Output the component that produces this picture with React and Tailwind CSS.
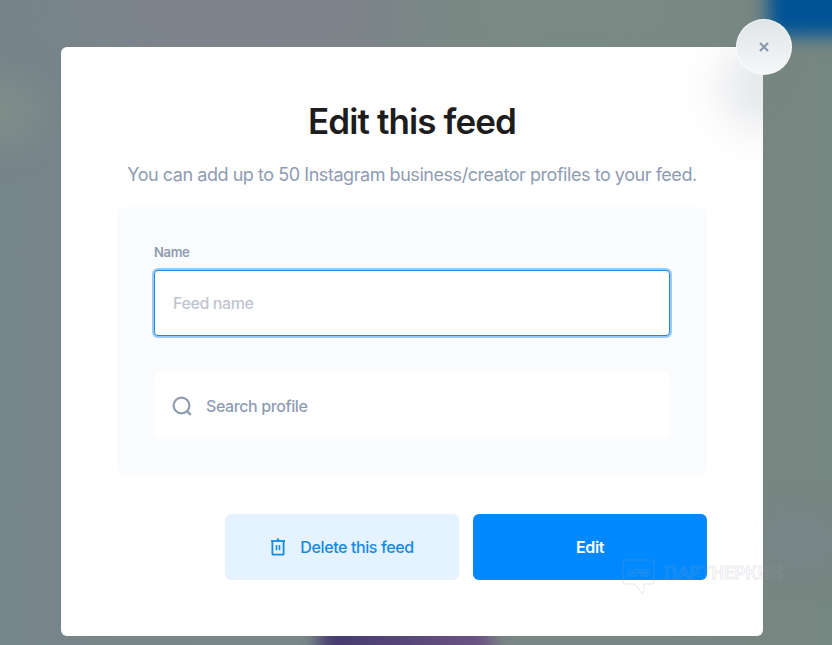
import { useState } from "react";

function SearchIcon() {
  return (
    <svg width="20" height="20" viewBox="0 0 20 20" fill="none" className="shrink-0" aria-hidden="true">
      <circle cx="9.5" cy="9.5" r="7.9" stroke="currentColor" strokeWidth="2.2" />
      <path d="M14.8 14.8L18.8 18.8" stroke="currentColor" strokeWidth="2.4" />
    </svg>
  );
}

function TrashIcon() {
  return (
    <svg width="16" height="18" viewBox="0 0 16 18" fill="none" stroke="currentColor" aria-hidden="true">
      <path d="M1 3H15" strokeWidth="1.8" />
      <path d="M8 0.5V3" strokeWidth="2.2" />
      <path d="M2.4 3V15.9Q2.4 16.7 3.2 16.7H12.8Q13.6 16.7 13.6 15.9V3" strokeWidth="1.8" />
      <path d="M6.5 7V12.2M9.5 7V12.2" strokeWidth="1.6" />
    </svg>
  );
}

function Watermark() {
  return (
    <div className="pointer-events-none absolute -right-5 bottom-[41px] flex items-start gap-2 text-gray-400/25">
      <svg width="34" height="36" viewBox="0 0 34 36" fill="none" stroke="currentColor" aria-hidden="true">
        <path d="M3 1H30Q32 1 32 3V23Q32 25 30 25H22V33L20 34.5L13 25H3Q1 25 1 23V3Q1 1 3 1Z" />
        <path d="M6 11H27V16Q27 17 26 17H20Q18 17 18 15V13H15V15Q15 17 13 17H6Z" />
        <path d="M8 13H12V15H8ZM20 13H25V15H20Z" />
      </svg>
      <span className="pt-1 text-[17px] leading-5 font-semibold text-transparent [-webkit-text-stroke:1px_rgba(156,163,175,0.25)]">
        ПАРТНЕРКИН
      </span>
    </div>
  );
}

export default function App() {
  const [name, setName] = useState("");
  const [search, setSearch] = useState("");

  return (
    <div className="relative min-h-screen overflow-hidden bg-linear-to-r from-[#76858a] via-[#7b8887] to-[#768681] pt-[47px] pr-[69px] pb-[9px] pl-[61px] font-['Inter',sans-serif]">
      {/* Blurred page behind the modal */}
      <div className="absolute -top-12 left-20 h-28 w-80 rounded-full bg-[#7d828b] blur-2xl" />
      <div className="absolute -top-12 right-28 h-28 w-72 rounded-full bg-[#7b8a84] blur-2xl" />
      <div className="absolute top-20 -left-10 h-16 w-20 rounded-full bg-[#7f8d89] blur-lg" />
      <div className="absolute -top-12 -right-12 h-[84px] w-28 bg-[#005396] blur-[9px]" />
      <div className="absolute right-0 bottom-20 h-12 w-16 bg-[#78858a] blur-lg" />
      <div className="absolute -bottom-5 left-[318px] h-12 w-44 rounded-full bg-linear-to-r from-[#41386c] to-[#6f5585] blur-[9px]" />

      {/* Modal */}
      <div role="dialog" aria-labelledby="feed-title" className="relative rounded-md bg-white px-14 pt-[52px] pb-14">
        <div className="pointer-events-none absolute inset-0 overflow-hidden rounded-md">
          <div className="absolute top-0 -right-10 h-20 w-20 rounded-full bg-gray-500/20 blur-xl" />
        </div>
        <button
          type="button"
          aria-label="Close"
          className="absolute -top-7 -right-[29px] flex h-14 w-14 items-center justify-center rounded-full border border-white/70 bg-linear-to-t from-[#f6f8f9] to-[#dfe4e7] text-[#8a97ab]"
        >
          <svg width="10" height="10" viewBox="0 0 10 10" stroke="currentColor" strokeWidth="2.2" aria-hidden="true">
            <path d="M1 1L9 9M9 1L1 9" />
          </svg>
        </button>

        <h1 id="feed-title" className="text-center text-[35px] leading-[44px] font-semibold tracking-tight text-[#1d1d1d]">
          Edit this feed
        </h1>
        <p className="mt-5 text-center text-[18px] leading-6 tracking-tight text-[#8e9cb2]">
          You can add up to 50 Instagram business/creator profiles to your feed.
        </p>

        <form onSubmit={(e) => e.preventDefault()}>
          <div className="mt-5 rounded-md bg-[#f9fbfd] p-[37px]">
            <label htmlFor="feed-name" className="block text-[13px] leading-4 font-semibold tracking-tight text-[#8e9cb2]">
              Name
            </label>
            <input
              id="feed-name"
              type="text"
              placeholder="Feed name"
              value={name}
              onChange={(e) => setName(e.target.value)}
              className="mt-[10px] h-[66px] w-full rounded-sm border border-[#2389d3] bg-white px-[18px] text-[16px] font-medium tracking-tight text-[#1d1d1d] ring-2 ring-[#9acbf8] outline-none placeholder:text-[#c0c5d1]"
            />

            <div className="mt-[37px] flex h-[66px] items-center gap-[14px] rounded-md bg-white px-[18px] text-[#8e9cb2]">
              <SearchIcon />
              <input
                type="text"
                aria-label="Search profile"
                placeholder="Search profile"
                value={search}
                onChange={(e) => setSearch(e.target.value)}
                className="min-w-0 flex-1 bg-transparent text-[16px] font-medium tracking-tight outline-none placeholder:text-[#8e9cb2]"
              />
            </div>
          </div>

          {/* Actions */}
          <div className="mt-[38px] flex justify-end gap-[14px]">
            <button
              type="button"
              className="flex h-[66px] w-[234px] items-center justify-center gap-[14px] rounded-md bg-[#e5f2ff] text-[16px] font-medium tracking-tight text-[#148ae2]"
            >
              <TrashIcon />
              Delete this feed
            </button>
            <button
              type="submit"
              className="h-[66px] w-[234px] rounded-md bg-[#0088ff] text-[16px] font-semibold tracking-tight text-white"
            >
              Edit
            </button>
          </div>
        </form>

        <Watermark />
      </div>
    </div>
  );
}
